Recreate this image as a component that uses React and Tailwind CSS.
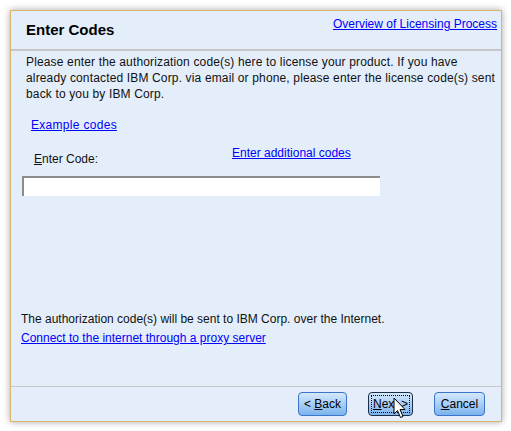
import React from "react";

const Btn = ({ children, focused = false, className = "" }) => (
    <button
        type="button"
        className={`h-[24px] rounded-[4px] border bg-gradient-to-b from-[#d3e8fc] via-[#a9cff6] to-[#7ab3ee] text-[12px] text-black leading-none ${
            focused ? "border-[#1f2d44] p-[2px]" : "border-[#3b74c8]"
        } ${className}`}
    >
        {focused ? (
            <span className="flex h-full w-full items-center justify-center border border-dotted border-black">
                {children}
            </span>
        ) : (
            <span className="flex h-full w-full items-center justify-center">{children}</span>
        )}
    </button>
);

const Cursor = () => (
    <svg width="14" height="22" viewBox="0 0 14 22" className="absolute left-[393px] top-[397px]">
        <path
            d="M1 1 L1 17 L4.5 13.5 L7.5 20.5 L10 19.5 L7 12.5 L12 12.5 Z"
            fill="#ffffff"
            stroke="#000000"
            strokeWidth="1"
            strokeLinejoin="round"
        />
    </svg>
);

export default function App() {
    return (
        <div
            className="relative h-[431px] w-[511px] bg-white pl-[10px] pt-[10px]"
            style={{ fontFamily: '"Liberation Sans", Arial, sans-serif' }}
        >
            <div className="flex h-[412px] w-[492px] flex-col border border-[#dcb36a] bg-[#e3eefa] shadow-[0_0_7px_rgba(0,0,0,0.35)]">
                {/* Header */}
                <div className="flex h-[40px] justify-between border-b-2 border-[#c6c6c6] pl-[15px] pr-[4px]">
                    <div className="pt-[10px] text-[15px] font-bold leading-[18px] text-black">Enter Codes</div>
                    <a href="#" className="pt-[5px] text-[12px] leading-[16px] text-[#0000ff] underline">
                        Overview of Licensing Process
                    </a>
                </div>

                {/* Body */}
                <div className="flex flex-1 flex-col text-[12px] leading-[16px] text-[#111]">
                    <p className="pl-[15px] pt-[3px] tracking-[0.15px]">
                        Please enter the authorization code(s) here to license your product. If you have
                        <br />
                        already contacted IBM Corp. via email or phone, please enter the license code(s) sent
                        <br />
                        back to you by IBM Corp.
                    </p>
                    <a href="#" className="ml-[20px] mt-[15px] self-start text-[#0000ff] underline tracking-[0.3px]">
                        Example codes
                    </a>
                    <div className="mt-[12px] flex">
                        <span className="ml-[23px] mt-[6px] w-[198px]">
                            <span className="underline">E</span>nter Code:
                        </span>
                        <a href="#" className="text-[#0000ff] underline">
                            Enter additional codes
                        </a>
                    </div>
                    <div className="ml-[11px] mt-[9px] h-[20px] w-[358px] border-l-2 border-t-2 border-[#8c8c8c] bg-white" />

                    <div className="mt-auto pb-[40px] pl-[10px]">
                        <p>The authorization code(s) will be sent to IBM Corp. over the Internet.</p>
                        <a href="#" className="mt-[3px] inline-block text-[#0000ff] underline">
                            Connect to the internet through a proxy server
                        </a>
                    </div>
                </div>

                {/* Footer */}
                <div className="flex h-[35px] items-center justify-end border-t border-[#c8c8c8] pr-[16px]">
                    <Btn className="w-[49px]">
                        &lt;&nbsp;<span className="underline">B</span>ack
                    </Btn>
                    <Btn focused className="ml-[21px] w-[45px]">
                        <span className="underline">N</span>ext &gt;
                    </Btn>
                    <Btn className="ml-[21px] w-[51px]">
                        <span className="underline">C</span>ancel
                    </Btn>
                </div>
            </div>
            <Cursor />
        </div>
    );
}
